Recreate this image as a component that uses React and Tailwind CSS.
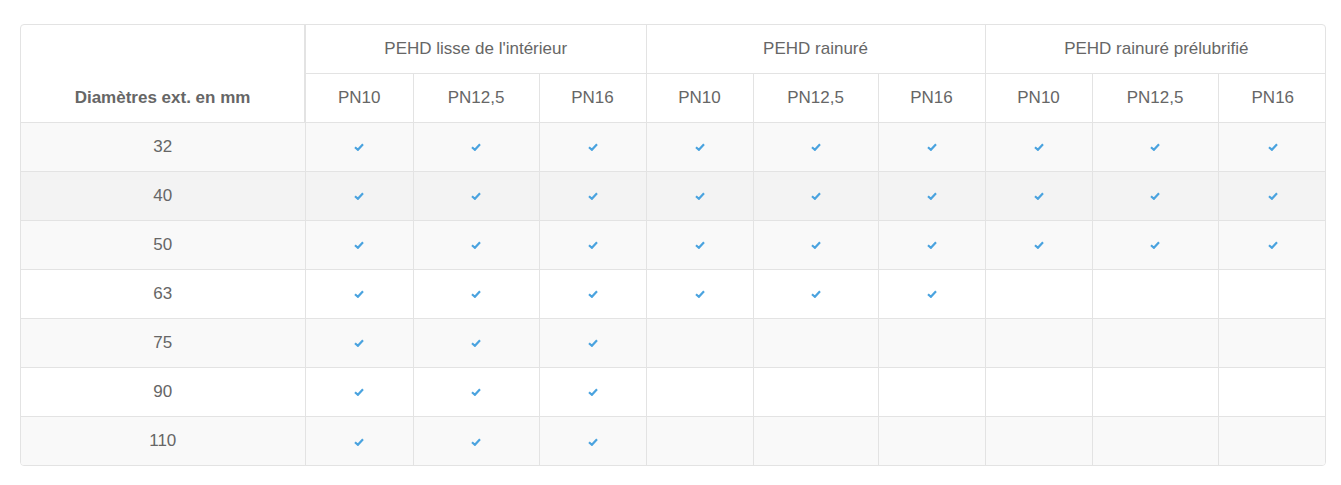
const groups = ['PEHD lisse de l\'intérieur', 'PEHD rainuré', 'PEHD rainuré prélubrifié'];
const subs = ['PN10', 'PN12,5', 'PN16'];
const widths = [108, 126, 107, 107, 125, 107, 107, 126, 109];

// how many columns are checked per diameter
const rows = [
    { d: '32', n: 9, bg: 'bg-[#f9f9f9]' },
    { d: '40', n: 9, bg: 'bg-[#f3f3f3]' },
    { d: '50', n: 9, bg: 'bg-[#f9f9f9]' },
    { d: '63', n: 6, bg: 'bg-white' },
    { d: '75', n: 3, bg: 'bg-[#f9f9f9]' },
    { d: '90', n: 3, bg: 'bg-white' },
    { d: '110', n: 3, bg: 'bg-[#f9f9f9]' },
];

function Check() {
    return (
        <svg viewBox="0 0 10 8" className="inline-block w-[10px] h-[8px] align-middle">
            <path d="M1 4.2 L3.9 6.8 L9 1.2" fill="none" stroke="#4aa3df" strokeWidth="2.2" strokeLinejoin="miter" />
        </svg>
    );
}

export default function App() {
    return (
        <div className="w-[1341px] h-[485px] bg-white pt-[24px] pl-[20px]" style={{ fontFamily: '"Liberation Sans", Arial, sans-serif' }}>
            <div className="w-[1306px] border border-[#e3e3e3] rounded-[4px] overflow-hidden">
                <table className="w-full border-collapse table-fixed text-[17px] text-[#666]">
                    <colgroup>
                        <col className="w-[284px]" />
                        {widths.map((w, i) => (
                            <col key={i} style={{ width: w }} />
                        ))}
                    </colgroup>
                    <thead>
                        <tr className="h-[48px]">
                            <th rowSpan={2} className="align-bottom pb-[11px] font-bold text-[#666] border-r-2 border-[#e3e3e3]">
                                Diamètres ext. en mm
                            </th>
                            {groups.map((g, i) => (
                                <th key={g} colSpan={3} className={`font-normal border-b border-[#e3e3e3] ${i < 2 ? 'border-r' : ''}`}>
                                    {g}
                                </th>
                            ))}
                        </tr>
                        <tr className="h-[49px]">
                            {widths.map((_, i) => (
                                <th
                                    key={i}
                                    className={`font-normal border-[#e3e3e3] ${i < 8 ? 'border-r' : ''}`}
                                >
                                    {subs[i % 3]}
                                </th>
                            ))}
                        </tr>
                    </thead>
                    <tbody>
                        {rows.map((r) => (
                            <tr key={r.d} className={`h-[49px] border-t border-[#e3e3e3] ${r.bg}`}>
                                <td className="text-center border-r border-[#e3e3e3]">{r.d}</td>
                                {widths.map((_, i) => (
                                    <td key={i} className={`text-center border-[#e3e3e3] ${i < 8 ? 'border-r' : ''}`}>
                                        {i < r.n && <Check />}
                                    </td>
                                ))}
                            </tr>
                        ))}
                    </tbody>
                </table>
            </div>
        </div>
    );
}
